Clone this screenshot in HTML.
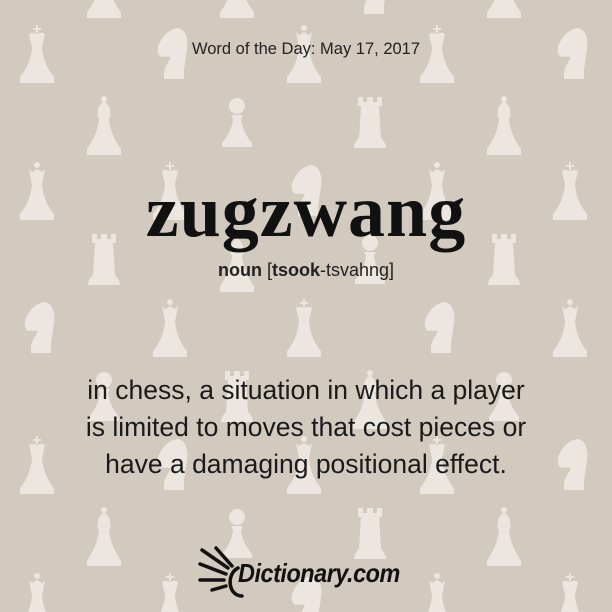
<!DOCTYPE html>
<html><head><meta charset="utf-8"><style>
html,body{margin:0;padding:0}
body{width:612px;height:612px;background:#d2c9bf;position:relative;overflow:hidden;font-family:"Liberation Sans",sans-serif;color:#111}
#bg{position:absolute;left:0;top:0}
.t{position:absolute;left:0;width:612px;text-align:center;white-space:nowrap}
</style></head><body>
<svg id="bg" width="612" height="612" viewBox="0 0 612 612">
<defs>
<g id="pawn"><circle cx="0" cy="9" r="8"/><path d="M-6 18h12l-2 4h-8z"/><path d="M-4 22h8c1 10 6 18 11 24v4h-30v-4c5-6 10-14 11-24z"/></g>
<g id="rook"><path d="M-12 0h5v5h4v-5h6v5h4v-5h5v9h-24z"/><path d="M-9 9h18l2 32c3 3 5 6 5 10h-32c0-4 2-7 5-10z"/></g>
<g id="knight"><path d="M-12 22c3-9 9-17 19-19c7 0 12 9 10 21c-1 9-3 18-3 24v6h-20v-6c0-6 5-11 7-16c-4 0-7-1-9 0c-3 0-5-5-4-10z"/></g>
<g id="king"><path d="M-1 0h2v3h3v2h-3v3h-2v-3h-3v-2h3z"/><path d="M-8 9c3-2 5-1 8 0c3-1 5-2 8 0l-2 9h-12z"/><path d="M-6 18h12l-1 4h-10z"/><path d="M-5 22h10c1 14 7 24 12 30v6h-34v-6c5-6 11-16 12-30z"/></g>
<g id="queen"><circle cx="0" cy="3" r="3"/><path d="M-8 7l3 3 5-3 5 3 3-3-2 11h-12z"/><path d="M-6 18h12l-1 4h-10z"/><path d="M-5 22h10c1 14 7 24 12 30v6h-34v-6c5-6 11-16 12-30z"/></g>
<g id="bishop"><circle cx="0" cy="2" r="3"/><path d="M0 4c5 4 7 8 6 13h-12c-1-5 1-9 6-13z"/><path d="M-7 17h14l-1 4h-12z"/><path d="M-5 21h10c1 14 7 24 12 31v6h-34v-6c5-7 11-17 12-31z"/></g>
</defs>
<g id="pieces" fill="#ebe6e0"></g>
</svg>
<div class="t" style="top:40px;font-size:16.5px;color:#222">Word of the Day: May 17, 2017</div>
<div class="t" style="top:170px;font-family:'Liberation Serif',serif;font-weight:bold;font-size:74px;letter-spacing:1px;color:#111">zugzwang</div>
<div class="t" style="top:260px;font-size:18px;color:#222"><b>noun</b> [<b>tsook</b>-tsvahng]</div>
<div class="t" style="top:372px;font-size:26.5px;line-height:37px;color:#1a1a1a">in chess, a situation in which a player<br>is limited to moves that cost pieces or<br>have a damaging positional effect.</div>
<svg style="position:absolute;left:196px;top:546px" width="70" height="56" viewBox="0 0 70 56">
<g stroke="#111" stroke-width="3.5" fill="none" stroke-linecap="round">
<path d="M6 4l26 18"/><path d="M20 2l16 18"/><path d="M4 18l26 10"/><path d="M4 34h24"/><path d="M16 44l14-4"/>
<path d="M46 50c-14 0-16-22-4-28"/>
</g></svg>
<div style="position:absolute;left:238px;top:558px;font-family:'Liberation Sans',sans-serif;font-weight:bold;font-style:italic;font-size:26px;color:#111;letter-spacing:-0.5px;transform:scaleX(0.9);transform-origin:left">Dictionary.com</div>
<script>
var g=document.getElementById('pieces');
var xs=[37,104,170,237,304,370,437,504,570];
var types=['king','pawn','knight','rook','queen','bishop'];
var n=0;
for(var c=0;c<xs.length;c++){
  var start=(c%2==0)?25:-40;
  for(var y=start;y<640;y+=137){
    var t=types[(c*5+n*7+((y/137)|0)*3)%6];n++;
    var u=document.createElementNS('http://www.w3.org/2000/svg','use');
    u.setAttribute('href','#'+t);
    u.setAttribute('transform','translate('+xs[c]+','+y+')');
    g.appendChild(u);
  }
}
</script>
</body></html>
